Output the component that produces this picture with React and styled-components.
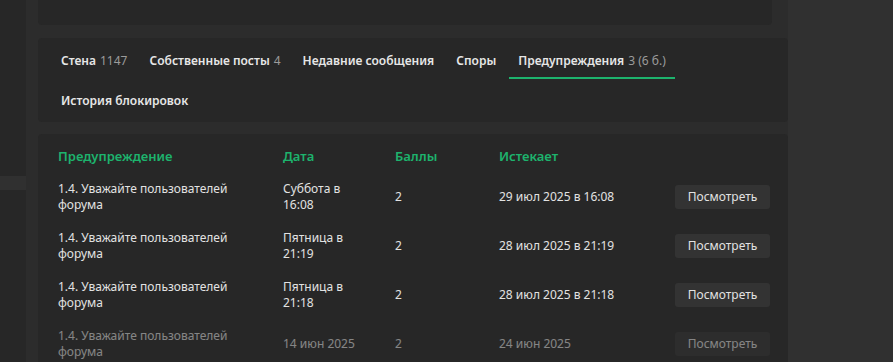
import React from "react";
import styled, { createGlobalStyle } from "styled-components";

const GlobalStyle = createGlobalStyle`
  body {
    margin: 0;
    background: #303030;
    font-family: "Noto Sans", "Open Sans", sans-serif;
    color: #e2e2e2;
  }
`;

const Page = styled.div`
  display: flex;
  height: 362px;
  overflow: hidden;
`;

const Sidebar = styled.div`
  width: 26px;
  display: flex;
  flex-direction: column;
  gap: 14px;
`;

const SideBlock = styled.div`
  background: #272727;
  height: ${(p) => p.h || "auto"};
  flex: ${(p) => (p.h ? "none" : 1)};
`;

const Main = styled.div`
  width: 750px;
  padding-left: 12px;
  background: #2c2c2c;
  display: flex;
  flex-direction: column;
`;

const Card = styled.div`
  flex-shrink: 0;
  background: #272727;
  border-radius: 4px;
  margin-right: ${(p) => p.inset || 0}px;
  margin-bottom: ${(p) => p.gap || 0}px;
`;

const TopCard = styled(Card)`
  height: 25px;
  border-radius: 0 0 4px 4px;
  overflow: hidden;
`;

const Tabs = styled(Card)`
  display: flex;
  flex-wrap: wrap;
  column-gap: 4px;
  row-gap: 2px;
  padding: 3px 14px 3px;
`;

const Tab = styled.div`
  height: 38px;
  padding: 2px 9px 0;
  display: flex;
  align-items: center;
  font-size: 12px;
  font-weight: 600;
  color: #e6e6e6;
  box-sizing: border-box;
  border-bottom: 2px solid ${(p) => (p.active ? "#1db36d" : "transparent")};
  white-space: nowrap;

  span {
    font-weight: 400;
    color: #9b9b9b;
    margin-left: 4px;
  }
`;

const TableCard = styled(Card)`
  flex-grow: 1;
  padding: 9px 18px 0 20px;
`;

const Grid = styled.div`
  display: grid;
  grid-template-columns: 225px 112px 104px 1fr 95px;
`;

const Head = styled.div`
  height: 25px;
  display: flex;
  align-items: center;
  font-size: 13px;
  font-weight: 600;
  color: #1db36d;
  margin-bottom: 4px;
`;

const Cell = styled.div`
  height: 49px;
  display: flex;
  align-items: center;
  padding-right: 25px;
  font-size: 12px;
  line-height: 16px;
  color: #e2e2e2;
  opacity: ${(p) => (p.muted ? 0.5 : 1)};
`;

const ButtonCell = styled(Cell)`
  padding-right: 0;
`;

const Button = styled.div`
  width: 95px;
  height: 24px;
  border-radius: 3px;
  background: #333333;
  display: flex;
  align-items: center;
  justify-content: center;
  font-size: 12px;
  color: #e2e2e2;
`;

const tabs = [
  ["Стена", "1147"],
  ["Собственные посты", "4"],
  ["Недавние сообщения"],
  ["Споры"],
  ["Предупреждения", "3 (6 б.)", true],
  ["История блокировок"],
];

const rows = [
  ["1.4. Уважайте пользователей форума", "Суббота в 16:08", "2", "29 июл 2025 в 16:08"],
  ["1.4. Уважайте пользователей форума", "Пятница в 21:19", "2", "28 июл 2025 в 21:19"],
  ["1.4. Уважайте пользователей форума", "Пятница в 21:18", "2", "28 июл 2025 в 21:18"],
  ["1.4. Уважайте пользователей форума", "14 июн 2025", "2", "24 июн 2025", true],
];

const App = () => {
  return (
    <>
      <GlobalStyle />
      <Page>
        <Sidebar>
          <SideBlock h="176px" />
          <SideBlock />
        </Sidebar>
        <Main>
          <TopCard inset={16} gap={13} />
          <Tabs gap={12}>
            {tabs.map(([label, count, active]) => (
              <Tab key={label} active={active}>
                {label}
                {count && <span>{count}</span>}
              </Tab>
            ))}
          </Tabs>
          <TableCard>
            <Grid>
              <Head>Предупреждение</Head>
              <Head>Дата</Head>
              <Head>Баллы</Head>
              <Head>Истекает</Head>
              <Head />
              {rows.map((r, i) => (
                <React.Fragment key={i}>
                  <Cell muted={r[4]}>{r[0]}</Cell>
                  <Cell muted={r[4]}>{r[1]}</Cell>
                  <Cell muted={r[4]}>{r[2]}</Cell>
                  <Cell muted={r[4]}>{r[3]}</Cell>
                  <ButtonCell muted={r[4]}>
                    <Button>Посмотреть</Button>
                  </ButtonCell>
                </React.Fragment>
              ))}
            </Grid>
          </TableCard>
        </Main>
      </Page>
    </>
  );
};

export default App;
